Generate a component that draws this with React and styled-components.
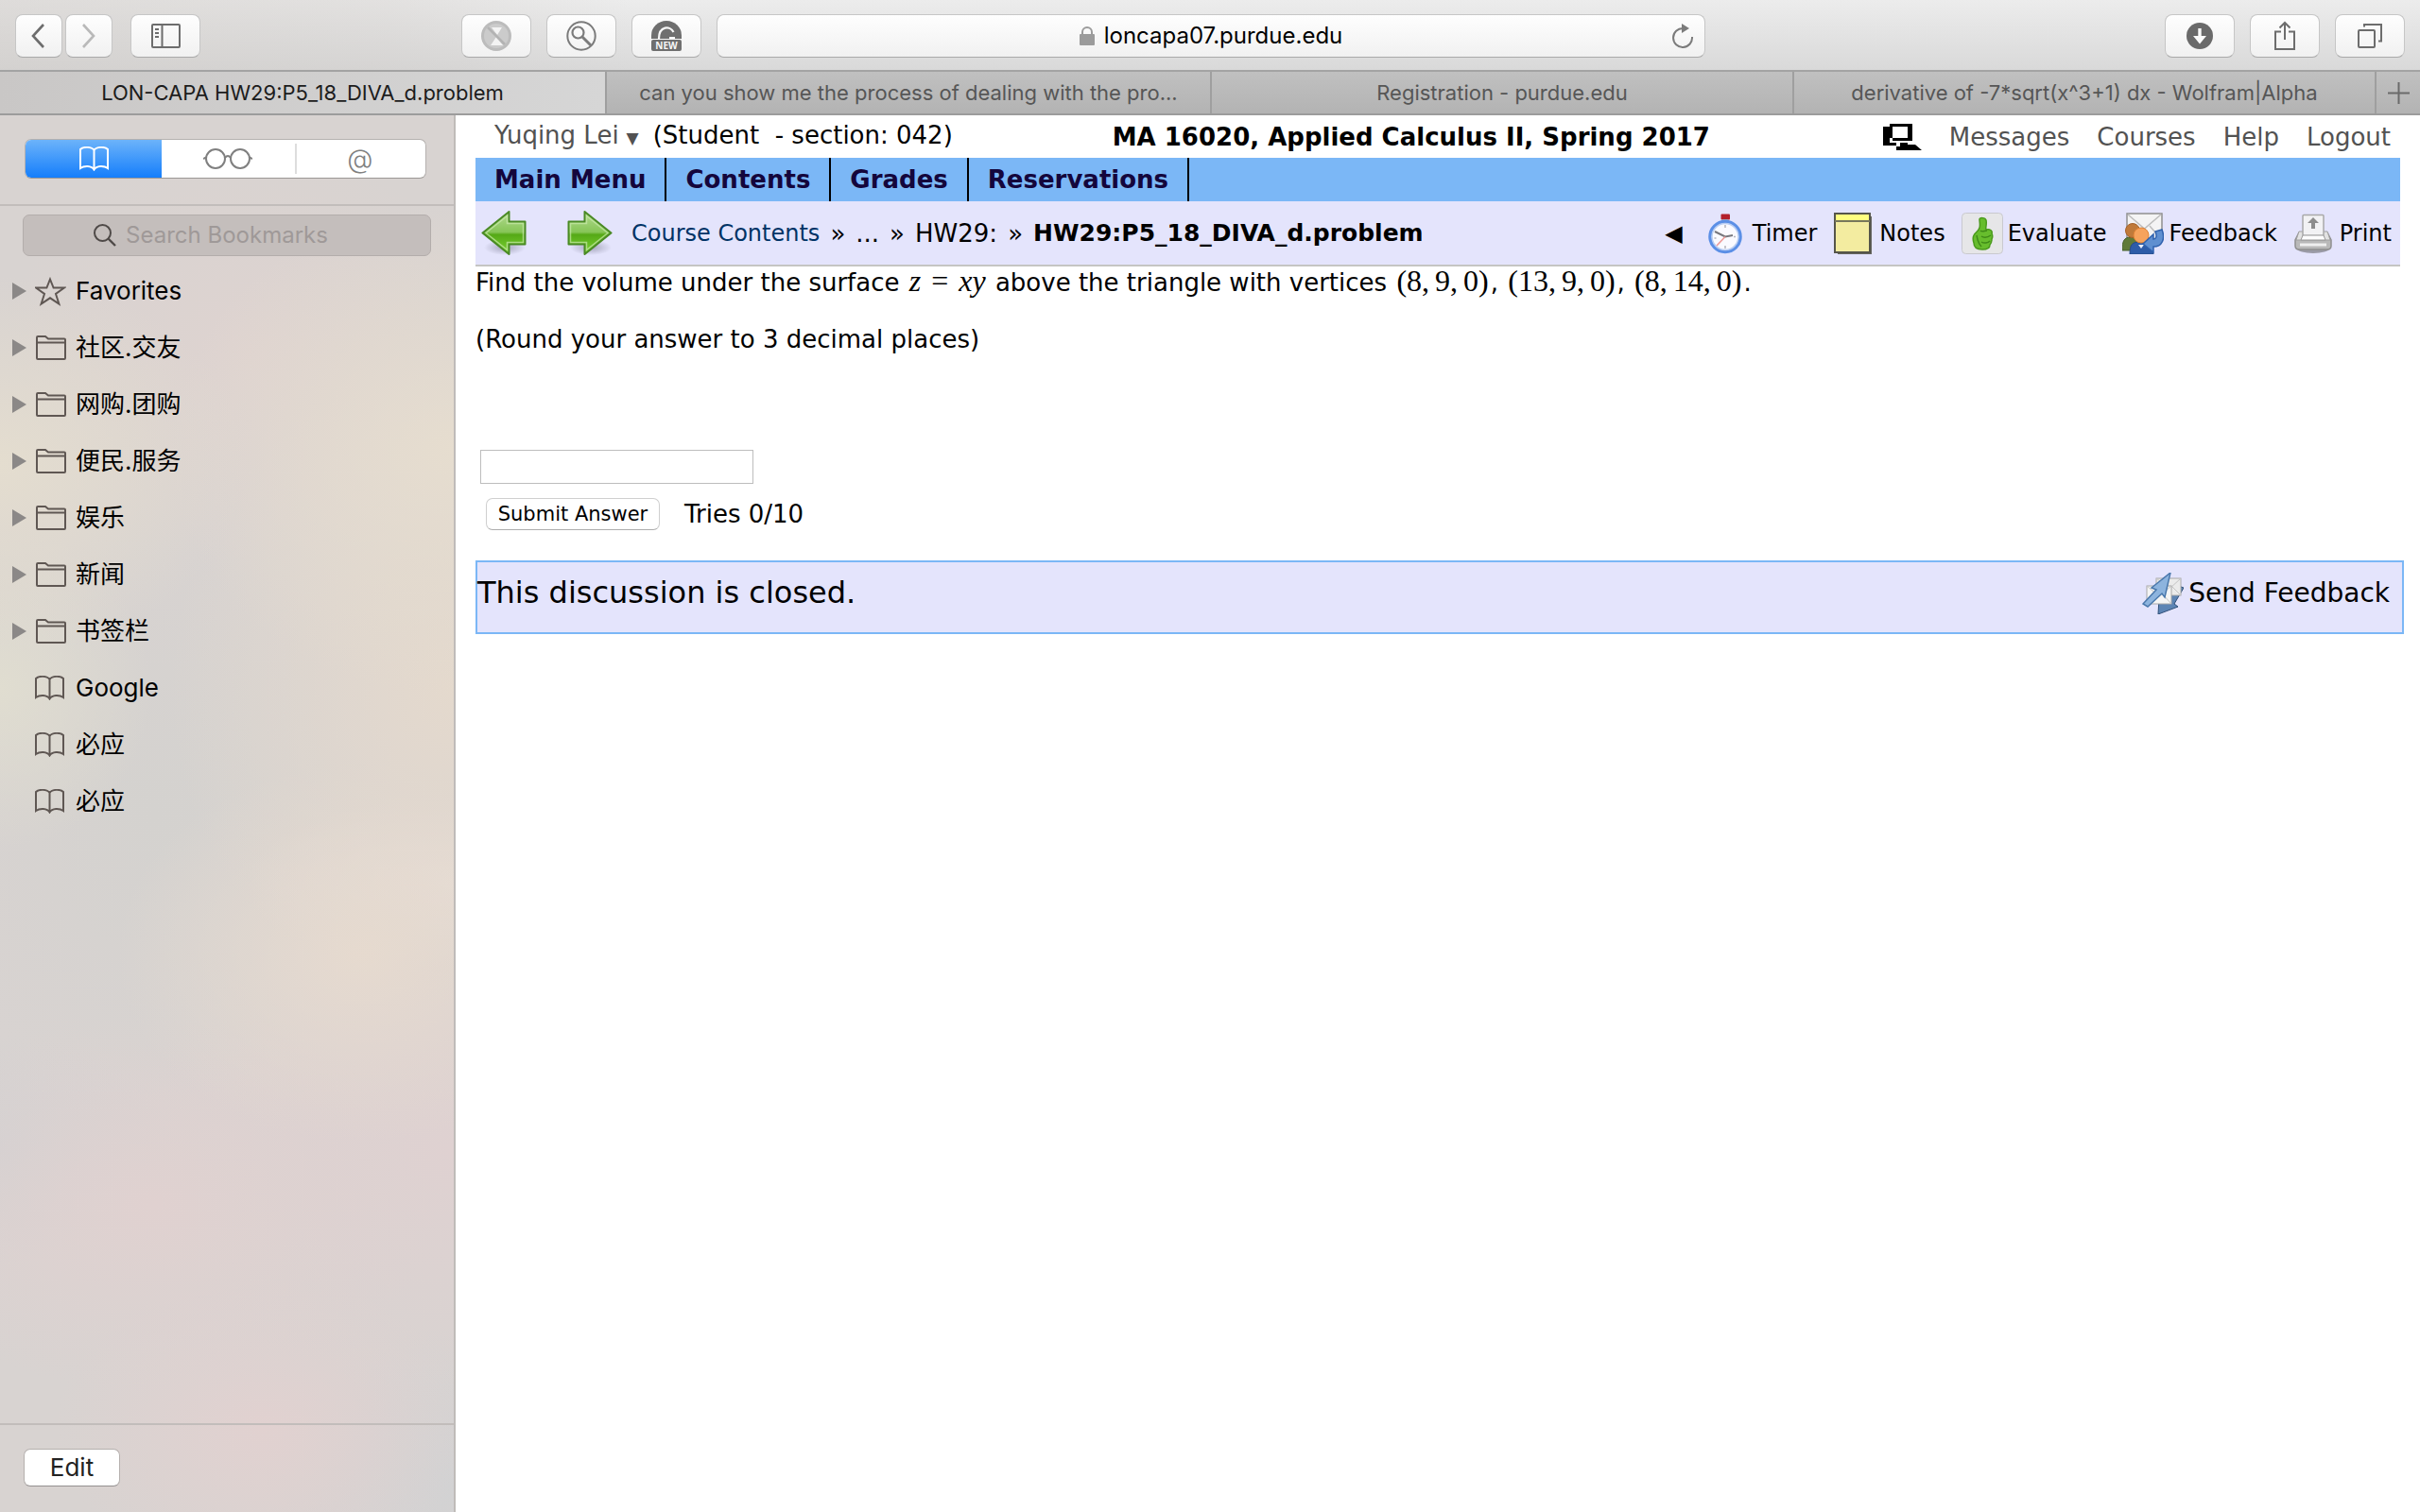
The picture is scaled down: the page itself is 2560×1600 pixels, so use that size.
import React, { useState } from 'react';
import styled, { createGlobalStyle, css } from 'styled-components';

const GlobalStyle = createGlobalStyle`
    *, *::before, *::after {
        box-sizing: border-box;
    }
    body {
        margin: 0;
        background: #fff;
    }
    button, input {
        font: inherit;
        color: inherit;
        margin: 0;
    }
    a {
        color: inherit;
        text-decoration: none;
    }
    svg {
        display: block;
        flex: none;
    }
`;

const systemFont = `Inter, "Noto Sans CJK SC", sans-serif`;
const pageFont = `"DejaVu Sans", Verdana, sans-serif`;

/* ---------- browser window ---------- */

const Window = styled.div`
    display: flex;
    flex-direction: column;
    min-height: 100vh;
    font-family: ${systemFont};
`;

const Toolbar = styled.header`
    display: grid;
    grid-template-columns: 472fr 1316fr 740fr;
    align-items: center;
    height: 76px;
    padding: 2px 16px 0;
    border-bottom: 2px solid #a3a3a3;
    background:
        linear-gradient(90deg, rgba(205, 200, 196, 0.45), rgba(205, 200, 196, 0.3) 16%, rgba(205, 200, 196, 0) 26%),
        linear-gradient(#ececec, #d9d9d9);
`;

const ToolGroup = styled.div`
    display: flex;
    gap: ${(props) => props.$gap || 16}px;
    justify-content: ${(props) => (props.$end ? 'flex-end' : 'flex-start')};
`;

const controlFace = css`
    height: 46px;
    border: 1px solid #c6c6c6;
    border-bottom-color: #a9a9a9;
    border-radius: 8px;
    background: linear-gradient(#fefefe, #f1f1f1);
`;

const ToolButton = styled.button`
    ${controlFace}
    display: flex;
    align-items: center;
    justify-content: center;
    width: ${(props) => (props.$narrow ? 50 : 74)}px;
    padding: 0;
    color: #6d6d6d;
`;

const AddressBar = styled.div`
    ${controlFace}
    display: grid;
    grid-template-columns: 34px 1fr 34px;
    align-items: center;
    flex: 1;
    padding: 0 6px;
`;

const AddressLabel = styled.label`
    grid-column: 2;
    display: flex;
    align-items: center;
    justify-content: center;
    gap: 10px;
`;

const AddressInput = styled.input`
    field-sizing: content;
    padding: 0;
    border: 0;
    outline: 0;
    background: transparent;
    color: #000;
    font-size: 24px;
    line-height: 32px;
`;

const PlainButton = styled.button`
    display: flex;
    align-items: center;
    justify-content: center;
    padding: 0;
    border: 0;
    background: transparent;
    color: #6d6d6d;
`;

const TabStrip = styled.nav`
    display: grid;
    grid-template-columns: 642fr 640fr 616fr 616fr 46px;
    height: 46px;
    border-bottom: 2px solid #9c9c9c;
    background: linear-gradient(#c0c0c0, #b3b3b3);
`;

const Tab = styled.button`
    min-width: 0;
    padding: 0 24px;
    border: 0;
    border-right: 2px solid #9f9f9f;
    background: ${(props) => (props.$active ? 'linear-gradient(90deg, #c9c7c6, #d6d6d6)' : 'transparent')};
    color: ${(props) => (props.$active ? '#1c1c1c' : '#565656')};
    font-size: 22px;
    line-height: 44px;
    white-space: nowrap;
    overflow: hidden;
    text-overflow: ellipsis;
`;

const Body = styled.div`
    display: flex;
    flex: 1;
`;

/* ---------- bookmarks sidebar ---------- */

const Sidebar = styled.aside`
    display: flex;
    flex-direction: column;
    flex: 0 0 482px;
    border-right: 2px solid #bfbbb9;
    background:
        radial-gradient(ellipse 260px 200px at 0% 25%, #e4ddcf, transparent),
        radial-gradient(ellipse 160px 170px at 0% 41%, #e0ddd0, transparent),
        radial-gradient(ellipse 300px 260px at 100% 24%, #e6ddcf, transparent),
        radial-gradient(ellipse 300px 340px at 100% 41%, #e4d9cd, transparent),
        radial-gradient(ellipse 260px 200px at 80% 60%, #e6dacf, transparent),
        radial-gradient(ellipse 220px 90px at 100% 55%, #e7dfdc, transparent),
        radial-gradient(ellipse 260px 300px at 34% 50%, #d4d2cf, transparent),
        radial-gradient(ellipse 340px 260px at 100% 74%, #dfd1d1, transparent),
        radial-gradient(ellipse 300px 200px at 34% 78%, #e0d1d0, transparent),
        radial-gradient(ellipse 190px 120px at 0% 74%, #d1d1d2, transparent),
        radial-gradient(ellipse 220px 160px at 58% 94%, #e1d1d0, transparent),
        radial-gradient(ellipse 200px 160px at 100% 98%, #d2d2d3, transparent),
        radial-gradient(ellipse 260px 220px at 55% 17%, #ded3d0, transparent),
        #d8d3d1;
`;

const SegmentWrap = styled.div`
    padding: 25px 29px 27px 26px;
    border-bottom: 2px solid #c2bdbb;
`;

const Segments = styled.div`
    display: grid;
    grid-template-columns: 145fr 141fr 139fr;
    height: 42px;
    border: 1px solid #b5b1af;
    border-bottom-color: #9b9795;
    border-radius: 7px;
    background: #fff;
    overflow: hidden;
`;

const Segment = styled.button`
    display: flex;
    align-items: center;
    justify-content: center;
    padding: 0;
    border: 0;
    background: ${(props) => (props.$active ? 'linear-gradient(#6cb3fa, #157efb)' : 'transparent')};
    color: ${(props) => (props.$active ? '#fff' : '#808080')};
    font-size: 28px;
    font-weight: 300;
    line-height: 30px;

    &:last-child {
        background: linear-gradient(#ddd, #ddd) no-repeat 0 4px / 2px 32px;
    }
`;

const SearchField = styled.label`
    display: flex;
    align-items: center;
    justify-content: center;
    gap: 10px;
    height: 44px;
    margin: 9px 24px 7px;
    padding-right: 34px;
    border: 1px solid #b3adab;
    border-radius: 7px;
    background: #c4bebc;
    color: #4f4a48;
`;

const SearchInput = styled.input`
    field-sizing: content;
    padding: 0;
    border: 0;
    outline: 0;
    background: transparent;
    font-size: 24px;
    line-height: 32px;

    &::placeholder {
        color: #9f9998;
        opacity: 1;
    }
`;

const BookmarkList = styled.ul`
    flex: 1;
    margin: 0;
    padding: 0;
    list-style: none;
`;

const BookmarkRow = styled.li`
    display: grid;
    grid-template-columns: 24px 43px 1fr;
    align-items: center;
    height: 60px;
    padding-left: 13px;
    color: #000;
    font-size: 26px;
    line-height: 36px;

    svg {
        color: #5f5753;
    }
`;

const Disclosure = styled.span`
    width: 15px;
    height: 18px;
    background: ${(props) => (props.$shown ? '#8b8887' : 'transparent')};
    clip-path: polygon(0 0, 100% 50%, 0 100%);
`;

const SidebarFooter = styled.footer`
    padding: 25px;
    height: 94px;
    border-top: 2px solid #c2bdbb;
`;

const EditButton = styled.button`
    width: 102px;
    height: 40px;
    padding: 0;
    border: 1px solid #b5b0ae;
    border-bottom-color: #949090;
    border-radius: 7px;
    background: #fff;
    color: #222;
    font-size: 26px;
    line-height: 36px;
`;

/* ---------- course page ---------- */

const Page = styled.main`
    flex: 1;
    min-width: 0;
    padding: 0 21px;
    color: #000;
    font-family: ${pageFont};
    font-size: 26px;
    line-height: 36px;
`;

const UserBar = styled.div`
    display: flex;
    align-items: center;
    justify-content: space-between;
    height: 45px;
    padding: 0 10px 0 20px;
`;

const UserName = styled.a`
    margin-right: 15px;
    color: #525252;
`;

const Caret = styled.span`
    margin-left: 8px;
    font-size: 17px;
`;

const Role = styled.span`
    white-space: pre;
`;

const CourseTitle = styled.strong`
    padding-right: 14px;
    font-size: 26px;
`;

const UserLinks = styled.div`
    display: flex;
    align-items: center;
    gap: 29px;
    color: #525252;
`;

const MenuBar = styled.nav`
    display: flex;
    height: 46px;
    background: #7bb7f6;
`;

const MenuItem = styled.a`
    padding: 0 20px;
    border-right: 2px solid #000;
    color: #14063c;
    font-size: 26px;
    font-weight: bold;
    line-height: 46px;
`;

const CrumbBar = styled.div`
    display: flex;
    align-items: center;
    height: 69px;
    padding: 0 9px 0 6px;
    border-bottom: 2px solid #c5c5c3;
    background: #e4e4fc;
`;

const PageArrows = styled.div`
    display: flex;
    gap: 43px;
    margin-right: 20px;
`;

const Crumbs = styled.nav`
    display: flex;
    flex: 1;
    gap: 11px;
    white-space: nowrap;

    a {
        color: #003366;
        font-size: 24px;
    }
    strong {
        font-size: 25px;
    }
`;

const Functions = styled.div`
    display: flex;
    align-items: center;
    gap: 17px;
    font-size: 24px;
`;

const CollapseMark = styled.span`
    margin-right: 8px;
`;

const FunctionLink = styled.a`
    display: flex;
    align-items: center;
    gap: 5px;
`;

const Paragraph = styled.p`
    margin: 0 0 26px;
    line-height: 34px;
`;

const MathText = styled.span`
    margin: 0 2px;
    font-family: "Liberation Serif", serif;
    font-size: 32px;
    line-height: 24px;
`;

const MathPart = styled.span`
    margin-left: ${(props) => props.$space || 6}px;
`;

const AnswerForm = styled.form`
    padding: 74px 0 31px 5px;
`;

const AnswerInput = styled.input`
    display: block;
    width: 289px;
    height: 36px;
    padding: 0 6px;
    border: 1px solid #bdbdbd;
    background: #fff;
`;

const SubmitRow = styled.div`
    display: flex;
    align-items: center;
    gap: 26px;
    margin-top: 14px;
    padding-left: 6px;
`;

const SubmitButton = styled.button`
    width: 184px;
    height: 34px;
    padding: 0;
    border: 1px solid #cfcfcf;
    border-bottom-color: #adadad;
    border-radius: 7px;
    background: #fff;
    font-size: 21px;
    line-height: 30px;
`;

const Discussion = styled.section`
    box-sizing: content-box;
    display: flex;
    justify-content: space-between;
    width: 100%;
    height: 74px;
    border: 2px solid #7bb7f6;
    background: #e4e4fc;
    font-size: 32px;
    line-height: 64px;
`;

const SendFeedback = styled.a`
    display: flex;
    align-items: center;
    gap: 5px;
    height: 66px;
    padding-right: 13px;
    font-size: 28px;
`;

/* ---------- icons ---------- */

const ChevronIcon = ({ right }) => (
    <svg width="18" height="28" viewBox="0 0 18 28" fill="none" stroke={right ? '#b9b9b9' : '#6d6d6d'} strokeWidth="2.6">
        <path d={right ? 'M3 2l11 12L3 26' : 'M14 2L3 14l11 12'} />
    </svg>
);

const SidebarIcon = () => (
    <svg width="31" height="26" viewBox="0 0 31 26" fill="none" stroke="currentColor" strokeWidth="2">
        <rect x="1" y="1" width="29" height="24" rx="1" />
        <path d="M11.5 1v24M4 6h4M4 10h4M4 14h4" />
    </svg>
);

const BlockedIcon = () => (
    <svg width="32" height="32" viewBox="0 0 32 32">
        <circle cx="16" cy="16" r="14.5" fill="#cbcbcb" stroke="#bcbcbc" strokeWidth="3" />
        <path d="M16 17l7 9H10z M11 7h11l-5 8z" fill="#f3f3f3" />
        <path d="M7 7l18 18" stroke="#b3b3b3" strokeWidth="2.6" />
    </svg>
);

const LensIcon = () => (
    <svg width="32" height="32" viewBox="0 0 32 32" fill="none" stroke="#7b7b7b">
        <circle cx="16" cy="16" r="14.7" strokeWidth="2" />
        <circle cx="12.5" cy="12.5" r="6" strokeWidth="2.2" />
        <path d="M17 17l9 9" strokeWidth="3" />
    </svg>
);

const NewIcon = () => (
    <svg width="32" height="32" viewBox="0 0 32 32">
        <path d="M0 19V15.500a16 15.500 0 0 1 32 0V19z" fill="#6f6f6f" />
        <path d="M8 19c0-14 12-14 15.500-7M19 18h6" fill="none" stroke="#f7f7f7" strokeWidth="2.200" />
        <rect y="20" width="32" height="12" rx="2" fill="#6f6f6f" />
        <text x="16" y="29.500" fill="#f7f7f7" fontSize="10" fontWeight="bold" textAnchor="middle" fontFamily="Open Sans, sans-serif">NEW</text>
    </svg>
);

const LockIcon = () => (
    <svg width="16" height="20" viewBox="0 0 16 20">
        <rect y="8" width="16" height="12" rx="1" fill="#9b9b9b" />
        <path d="M3 9V6a5 5 0 0 1 10 0v3" fill="none" stroke="#9b9b9b" strokeWidth="2" />
    </svg>
);

const ReloadIcon = () => (
    <svg width="24" height="26" viewBox="0 0 24 26">
        <path d="M12.500 5A10 10 0 1 0 22 14" fill="none" stroke="#7b7b7b" strokeWidth="2" />
        <path d="M11 0l8 5-8 5z" fill="#7b7b7b" />
    </svg>
);

const DownloadIcon = () => (
    <svg width="28" height="28" viewBox="0 0 28 28">
        <circle cx="14" cy="14" r="14" fill="#6a6a6a" />
        <path d="M12.300 6h3.400v8H21l-7 8.500L7 14h5.300z" fill="#fafafa" />
    </svg>
);

const ShareIcon = () => (
    <svg width="24" height="32" viewBox="0 0 24 32" fill="none" stroke="currentColor" strokeWidth="2">
        <path d="M8 11.500H2V30h20V11.500h-6M12 20V2M6.500 7.500L12 2l5.500 5.500" />
    </svg>
);

const WindowsIcon = () => (
    <svg width="26" height="26" viewBox="0 0 26 26" fill="none" stroke="currentColor" strokeWidth="2">
        <rect x="1" y="7" width="17" height="18" rx="1" />
        <path d="M7 3.500V1h18v17.500h-3" />
    </svg>
);

const PlusIcon = () => (
    <svg width="23" height="23" viewBox="0 0 23 23" stroke="#6a6a6a" strokeWidth="2">
        <path d="M11.500 0v23M0 11.500h23" />
    </svg>
);

const BookIcon = () => (
    <svg width="31" height="26" viewBox="0 0 31 26" fill="none" stroke="currentColor" strokeWidth="2">
        <path d="M15.500 4C13 0 4 0 1 3v20c4-3 12-3 14.500 1.500C18 20 26 20 30 23V3C27 0 18 0 15.500 4zM15.500 4v20" />
    </svg>
);

const GlassesIcon = () => (
    <svg width="52" height="24" viewBox="0 0 52 24" fill="none" stroke="currentColor" strokeWidth="2">
        <circle cx="13" cy="12" r="10" />
        <circle cx="39" cy="12" r="10" />
        <path d="M23 11q3-4 6 0M3 10.500L0 12M49 10.500l3 1.500" />
    </svg>
);

const SearchIcon = () => (
    <svg width="24" height="24" viewBox="0 0 24 24" fill="none" stroke="currentColor" strokeWidth="2">
        <circle cx="9.500" cy="9.500" r="8.500" />
        <path d="M15.500 15.500L23 23" strokeWidth="2.400" />
    </svg>
);

const StarIcon = () => (
    <svg width="33" height="31" viewBox="0 0 33 31" fill="none" stroke="currentColor" strokeWidth="2">
        <path d="M16 2.500l3.600 9H31l-9 6.500 3.400 10.500L16 22.300l-9.400 6.200L10 18l-9-6.500h11.400z" />
    </svg>
);

const FolderIcon = () => (
    <svg width="33" height="26" viewBox="0 0 33 26" fill="none" stroke="currentColor" strokeWidth="2">
        <path d="M2 24V2q0-1 1-1h8l3 2.500h17q1 0 1 1V24q0 1-1 1H3q-1 0-1-1zM2 7.500h30" />
    </svg>
);

const ArrowIcon = ({ right }) => (
    <svg width="48" height="50" viewBox="0 0 48 50">
        <defs>
            <linearGradient id="arrowFill" x1="0" y1="0" x2="0" y2="1">
                <stop offset="0" stopColor="#b4da92" />
                <stop offset="0.480" stopColor="#86c557" />
                <stop offset="0.540" stopColor="#55a916" />
                <stop offset="1" stopColor="#7dd435" />
            </linearGradient>
            <radialGradient id="arrowShade">
                <stop offset="0" stopColor="#8a8aa0" stopOpacity="0.700" />
                <stop offset="1" stopColor="#8a8aa0" stopOpacity="0" />
            </radialGradient>
        </defs>
        <ellipse cx="25" cy="40" rx="22" ry="8" fill="url(#arrowShade)" />
        <g transform={right ? 'matrix(-1 0 0 1 48 0)' : undefined}>
            <path d="M1.500 24.500L29.500 2v10.500h17v24h-17V47z" fill="url(#arrowFill)" stroke="#4a8a25" strokeWidth="2" strokeLinejoin="round" />
            <path d="M5 24.500L27.500 6.500v8h17v20h-17v8z" fill="none" stroke="#c9e9ab" strokeOpacity="0.700" strokeWidth="1.500" />
        </g>
    </svg>
);

const RemoteIcon = () => (
    <svg width="41" height="28" viewBox="0 0 41 28">
        <path fillRule="evenodd" d="M7 0h24v18H10v-3H7zM10 3v12h16V3z" fill="#000" />
        <path d="M0 3h7v17h7v3H0zM18 20h8v2h8l7 6H14v-4h4z" fill="#000" />
    </svg>
);

const TimerIcon = () => (
    <svg width="44" height="44" viewBox="0 0 44 44">
        <rect x="15.500" y="1.500" width="9.500" height="6" rx="1" fill="#b3202c" />
        <rect x="17" y="7" width="6" height="3" fill="#9aa4b8" />
        <circle cx="20" cy="25.500" r="16" fill="#fafaff" stroke="#5b8fe6" strokeWidth="3.500" />
        <circle cx="20" cy="25.500" r="14" fill="none" stroke="#b9cdf2" strokeWidth="1.500" />
        <path d="M9 20l11 5.500 8-1.500" fill="none" stroke="#77777d" strokeWidth="2" />
        <path d="M20 25.500L11 35" stroke="#ee9a98" strokeWidth="1.600" />
        <path d="M20 13v3M20 35v3M31 25.500h-2M8.500 27h2" stroke="#b5b5bd" strokeWidth="1.500" />
    </svg>
);

const NotesIcon = () => (
    <svg width="44" height="44" viewBox="0 0 44 44">
        <path d="M5 4h36v40H5z" fill="#65655f" />
        <rect x="2" y="1" width="37" height="41" fill="#f3eca0" stroke="#55554a" strokeWidth="2" />
        <rect x="3" y="2" width="35" height="6" fill="#ffff80" />
        <path d="M2 9h37" stroke="#77775c" strokeWidth="2" />
    </svg>
);

const EvaluateIcon = () => (
    <svg width="44" height="44" viewBox="0 0 44 44">
        <rect x="0.500" y="0.500" width="43" height="43" rx="4" fill="#e6e6e8" stroke="#c9c9cf" />
        <path d="M19 7c0-2 6-2 7 1 1 5-1 8 0 10 4-1 7 1 6 4 1 2 1 4 0 6 0 3-1 5-2 6 0 4-4 5-8 5-6 0-9-3-9-7-1-3-1-6 0-8 1-3 5-4 6-8 1-3 0-6 0-9z" fill="#67bd2d" stroke="#4a9a1c" strokeWidth="1.500" />
        <path d="M20 19c2 2 4 0 7 0M21 25c3 2 7 1 10-1M21 31c3 2 7 1 9-1M16 24c1 4 1 8 5 12" fill="none" stroke="#3f8a18" strokeWidth="1.500" />
    </svg>
);

const FeedbackIcon = () => (
    <svg width="44" height="44" viewBox="0 0 44 44">
        <rect x="5" y="1" width="37" height="28" fill="#f4f4f4" stroke="#8e8e8e" strokeWidth="1.500" />
        <path d="M6 2l17.500 15L41 2M6 28l11-13M41 28L29 14" fill="none" stroke="#bdbdbd" strokeWidth="1.500" />
        <path d="M0 40c0-10 2-14 9-14s9 5 9 14z" fill="#5f7a38" stroke="#46602a" />
        <circle cx="11" cy="19" r="7.500" fill="#c07a3a" stroke="#a5622a" />
        <path d="M8 44c0-11 3-13 11-13s12 4 14 13z" fill="#2d5ca8" stroke="#274a86" />
        <path d="M17 34l3 4 3-4z" fill="#e9eefb" />
        <circle cx="20" cy="24" r="8" fill="#f6a35c" stroke="#dd8236" />
        <path d="M22 33l11-10v5c3 0 4-3 2-8l7-2c4 10 0 18-9 18v6z" fill="#5f8fd0" stroke="#2f62ae" strokeWidth="1.500" />
    </svg>
);

const PrintIcon = () => (
    <svg width="44" height="44" viewBox="0 0 44 44">
        <ellipse cx="21" cy="38" rx="17" ry="5" fill="#9a9aa6" />
        <path d="M6 21h30l4 8v6q0 4-4 4H6q-4 0-4-4v-6z" fill="#b9b9b9" stroke="#8f8f8f" strokeWidth="1.500" />
        <path d="M6 20h30l3 9H3z" fill="#e2e2e2" stroke="#a0a0a0" />
        <rect x="10" y="2.500" width="22" height="22" rx="1" fill="#f2f2f4" stroke="#a9a9a9" strokeWidth="1.500" />
        <path d="M21 5l6 6h-4v6h-4v-6h-4z" fill="#8d8d8d" />
        <path d="M10 24h22l2 5H8z" fill="#fdfdfd" stroke="#999" />
        <path d="M7 34h28" stroke="#efefef" strokeWidth="3" />
    </svg>
);

const SendIcon = () => (
    <svg width="44" height="44" viewBox="0 0 44 44">
        <path d="M17 44l1-17 5 4 13-18 8 3-10 17 4 3z" fill="#5c84b4" stroke="#2f4f78" />
        <rect x="15" y="6" width="26" height="18" fill="#ebebeb" stroke="#a8a8a8" />
        <path d="M15 6l14 11L41 6M41 24l-9-9" fill="none" stroke="#c4c4c4" />
        <rect x="5" y="14" width="26" height="19" fill="#f5f5f5" stroke="#a8a8a8" />
        <path d="M5 33l10-10M31 33L21 22M5 14l13 11 13-11" fill="none" stroke="#c4c4c4" />
        <path d="M30 0L10 16l5 2L1 33l5 3 15-14 3 4z" fill="#8db4de" stroke="#4a78ac" strokeWidth="1.500" />
    </svg>
);

/* ---------- data ---------- */

const tabs = [
    'LON-CAPA HW29:P5_18_DIVA_d.problem',
    'can you show me the process of dealing with the pro...',
    'Registration - purdue.edu',
    'derivative of -7*sqrt(x^3+1) dx - Wolfram|Alpha',
];

const bookmarks = [
    { name: 'Favorites', icon: StarIcon, folder: true },
    { name: '社区.交友', icon: FolderIcon, folder: true },
    { name: '网购.团购', icon: FolderIcon, folder: true },
    { name: '便民.服务', icon: FolderIcon, folder: true },
    { name: '娱乐', icon: FolderIcon, folder: true },
    { name: '新闻', icon: FolderIcon, folder: true },
    { name: '书签栏', icon: FolderIcon, folder: true },
    { name: 'Google', icon: BookIcon },
    { name: '必应', icon: BookIcon },
    { name: '必应', icon: BookIcon },
];

const functions = [
    { name: 'Timer', icon: TimerIcon },
    { name: 'Notes', icon: NotesIcon },
    { name: 'Evaluate', icon: EvaluateIcon },
    { name: 'Feedback', icon: FeedbackIcon },
    { name: 'Print', icon: PrintIcon },
];

function Point({ coords }) {
    return (
        <MathText>
            ({coords[0]},<MathPart>{coords[1]}</MathPart>,<MathPart>{coords[2]}</MathPart>)
        </MathText>
    );
}

function BrowserToolbar() {
    const [url, setUrl] = useState('loncapa07.purdue.edu');

    return (
        <Toolbar>
            <ToolGroup $gap={19}>
                <ToolGroup $gap={3}>
                    <ToolButton $narrow aria-label="Back"><ChevronIcon /></ToolButton>
                    <ToolButton $narrow aria-label="Forward"><ChevronIcon right /></ToolButton>
                </ToolGroup>
                <ToolButton aria-label="Sidebar"><SidebarIcon /></ToolButton>
            </ToolGroup>
            <ToolGroup>
                <ToolButton aria-label="Blocker"><BlockedIcon /></ToolButton>
                <ToolButton aria-label="Lookup"><LensIcon /></ToolButton>
                <ToolButton aria-label="New"><NewIcon /></ToolButton>
                <AddressBar>
                    <AddressLabel>
                        <LockIcon />
                        <AddressInput aria-label="Address" value={url} onChange={(e) => setUrl(e.target.value)} />
                    </AddressLabel>
                    <PlainButton aria-label="Reload"><ReloadIcon /></PlainButton>
                </AddressBar>
            </ToolGroup>
            <ToolGroup $end>
                <ToolButton aria-label="Downloads"><DownloadIcon /></ToolButton>
                <ToolButton aria-label="Share"><ShareIcon /></ToolButton>
                <ToolButton aria-label="Show tabs"><WindowsIcon /></ToolButton>
            </ToolGroup>
        </Toolbar>
    );
}

function BookmarksSidebar() {
    return (
        <Sidebar>
            <SegmentWrap>
                <Segments>
                    <Segment $active aria-label="Bookmarks"><BookIcon /></Segment>
                    <Segment aria-label="Reading list"><GlassesIcon /></Segment>
                    <Segment aria-label="Shared links">@</Segment>
                </Segments>
            </SegmentWrap>
            <SearchField>
                <SearchIcon />
                <SearchInput type="text" aria-label="Search Bookmarks" placeholder="Search Bookmarks" />
            </SearchField>
            <BookmarkList>
                {bookmarks.map(({ name, icon: Icon, folder }, i) => (
                    <BookmarkRow key={i}>
                        <Disclosure $shown={folder} />
                        <Icon />
                        <span>{name}</span>
                    </BookmarkRow>
                ))}
            </BookmarkList>
            <SidebarFooter>
                <EditButton>Edit</EditButton>
            </SidebarFooter>
        </Sidebar>
    );
}

function CoursePage() {
    const [answer, setAnswer] = useState('');

    return (
        <Page>
            <UserBar>
                <div>
                    <UserName href="#">Yuqing Lei<Caret>▼</Caret></UserName>
                    <Role>(Student  - section: 042)</Role>
                </div>
                <CourseTitle>MA 16020, Applied Calculus II, Spring 2017</CourseTitle>
                <UserLinks>
                    <a href="#" aria-label="Remote"><RemoteIcon /></a>
                    <a href="#">Messages</a>
                    <a href="#">Courses</a>
                    <a href="#">Help</a>
                    <a href="#">Logout</a>
                </UserLinks>
            </UserBar>
            <MenuBar>
                <MenuItem href="#">Main Menu</MenuItem>
                <MenuItem href="#">Contents</MenuItem>
                <MenuItem href="#">Grades</MenuItem>
                <MenuItem href="#">Reservations</MenuItem>
            </MenuBar>
            <CrumbBar>
                <PageArrows>
                    <a href="#" aria-label="Previous"><ArrowIcon /></a>
                    <a href="#" aria-label="Next"><ArrowIcon right /></a>
                </PageArrows>
                <Crumbs>
                    <a href="#">Course Contents</a>
                    <span>»</span>
                    <span>...</span>
                    <span>»</span>
                    <span>HW29:</span>
                    <span>»</span>
                    <strong>HW29:P5_18_DIVA_d.problem</strong>
                </Crumbs>
                <Functions>
                    <CollapseMark>◀</CollapseMark>
                    {functions.map(({ name, icon: Icon }) => (
                        <FunctionLink href="#" key={name}><Icon />{name}</FunctionLink>
                    ))}
                </Functions>
            </CrumbBar>
            <Paragraph>
                Find the volume under the surface{' '}
                <MathText><i>z</i><MathPart $space={11}>=</MathPart><MathPart $space={11}><i>xy</i></MathPart></MathText>
                {' '}above the triangle with vertices{' '}
                <Point coords={[8, 9, 0]} />, <Point coords={[13, 9, 0]} />, <Point coords={[8, 14, 0]} />.
            </Paragraph>
            <Paragraph>(Round your answer to 3 decimal places)</Paragraph>
            <AnswerForm onSubmit={(e) => e.preventDefault()}>
                <AnswerInput aria-label="Answer" value={answer} onChange={(e) => setAnswer(e.target.value)} />
                <SubmitRow>
                    <SubmitButton type="submit">Submit Answer</SubmitButton>
                    <span>Tries 0/10</span>
                </SubmitRow>
            </AnswerForm>
            <Discussion>
                <span>This discussion is closed.</span>
                <SendFeedback href="#"><SendIcon />Send Feedback</SendFeedback>
            </Discussion>
        </Page>
    );
}

function App() {
    return (
        <Window>
            <GlobalStyle />
            <BrowserToolbar />
            <TabStrip>
                {tabs.map((title, i) => (
                    <Tab key={title} $active={i === 0}>{title}</Tab>
                ))}
                <PlainButton aria-label="New tab"><PlusIcon /></PlainButton>
            </TabStrip>
            <Body>
                <BookmarksSidebar />
                <CoursePage />
            </Body>
        </Window>
    );
}

export default App;
